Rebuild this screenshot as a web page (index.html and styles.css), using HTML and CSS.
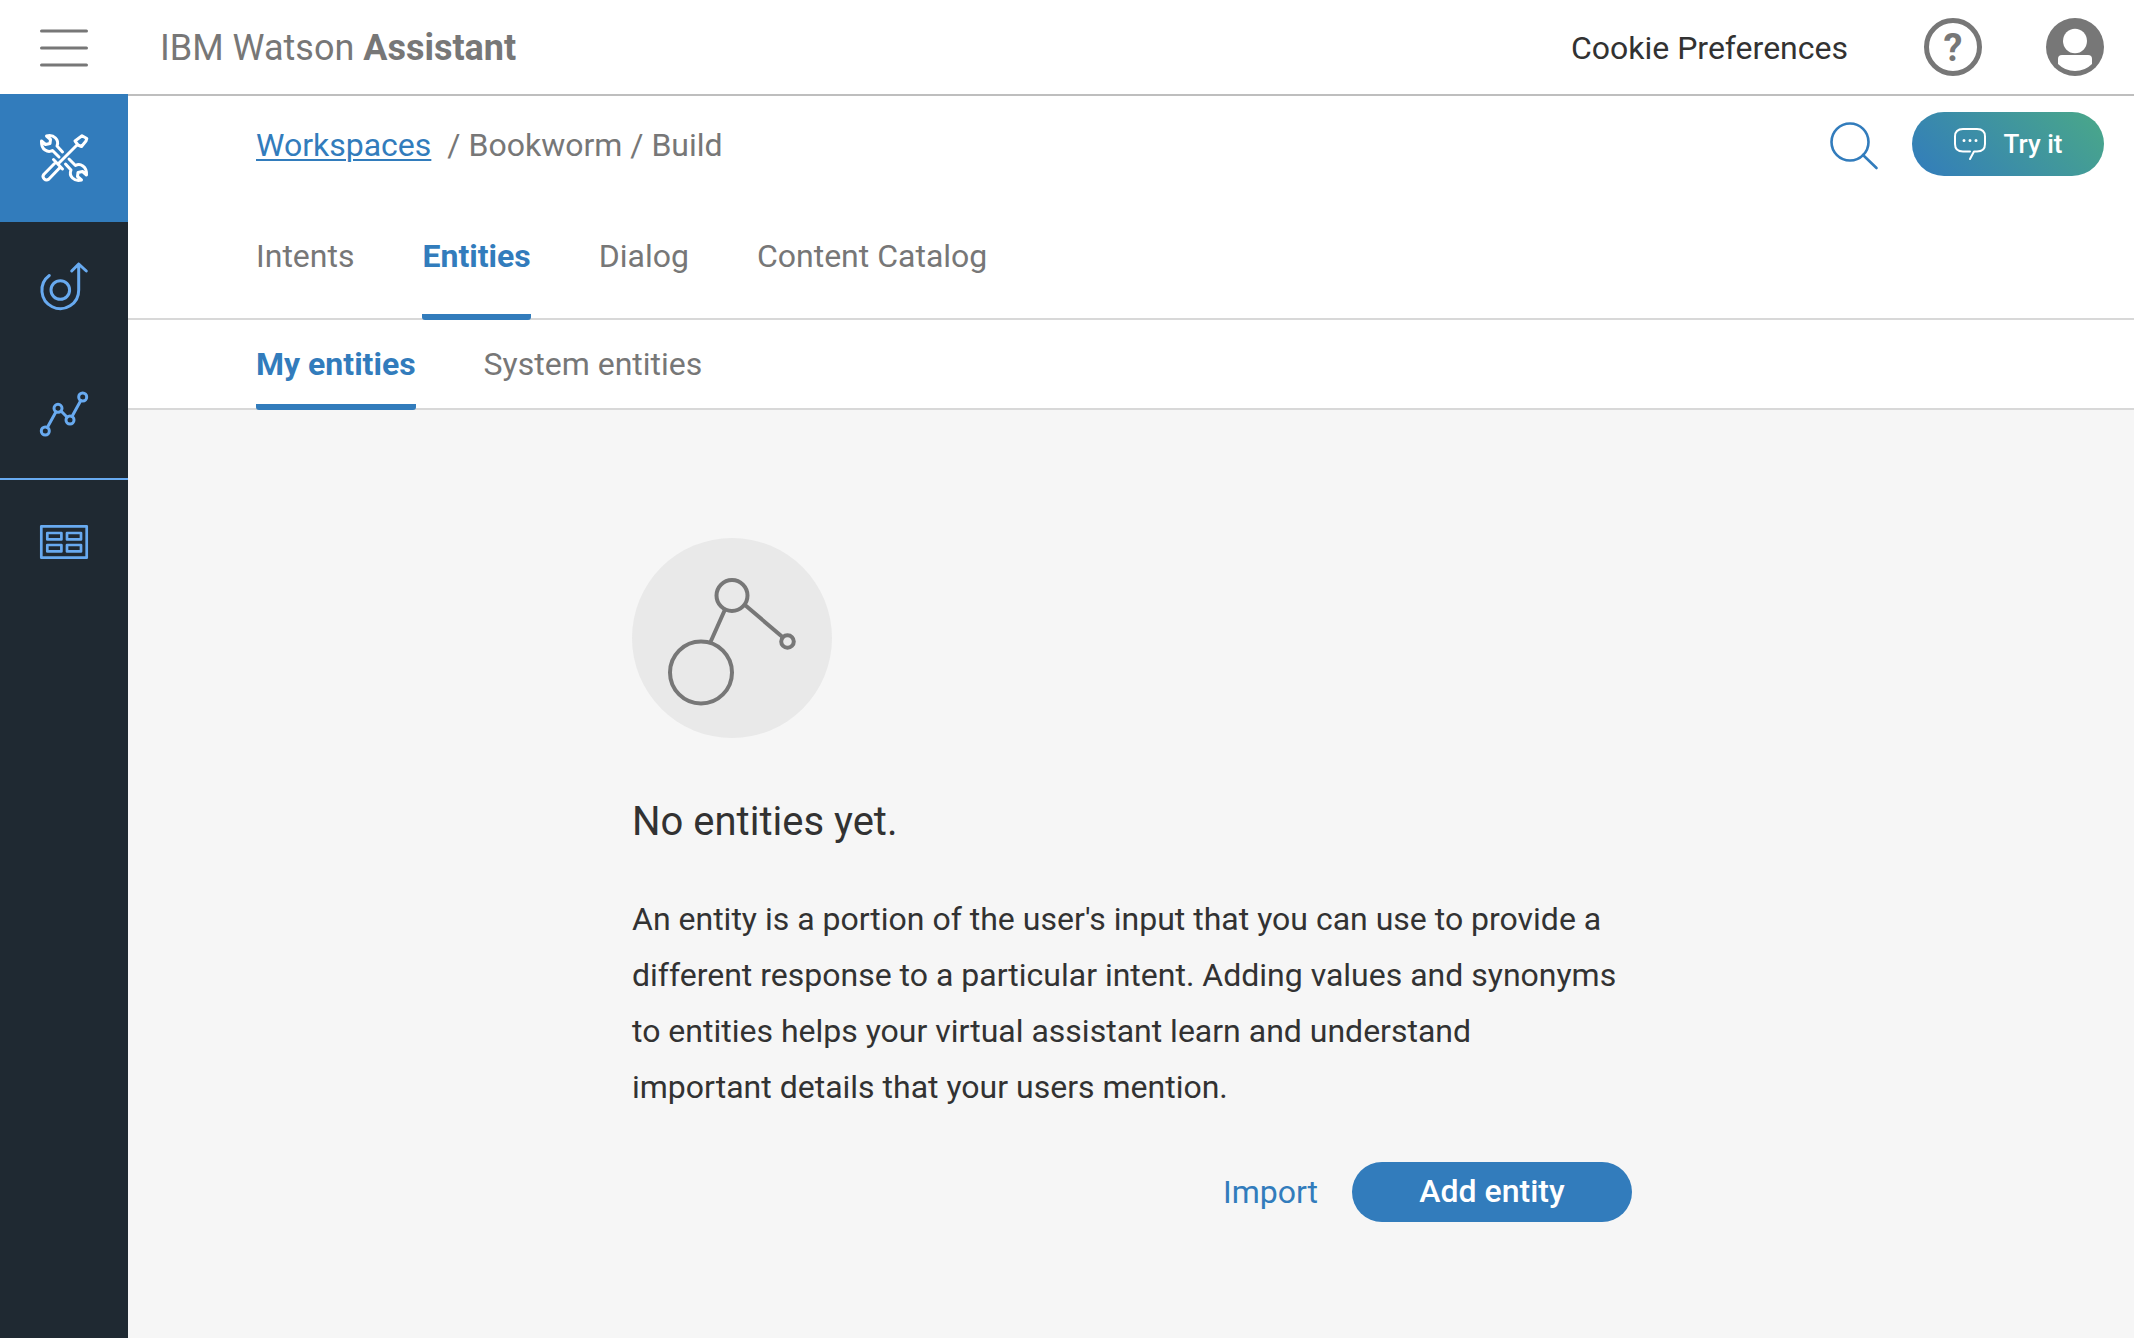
FILE: index.html
```html
<!DOCTYPE html>
<html lang="en">
<head>
<meta charset="utf-8">
<meta name="viewport" content="width=device-width, initial-scale=1">
<title>IBM Watson Assistant</title>
<link rel="stylesheet" href="styles.css">
</head>
<body>
<header class="header">
  <button class="icon-button menu-button" type="button" aria-label="Menu">
    <svg class="icon" viewBox="0 0 48 48" stroke-width="3"><path d="M1.500 8H46.500M1.500 25H46.500M1.500 42H46.500"/></svg>
  </button>
  <div class="brand">IBM Watson <strong>Assistant</strong></div>
  <a class="cookie-link" href="#">Cookie Preferences</a>
  <button class="icon-button help-button" type="button" aria-label="Help">?</button>
  <button class="icon-button" type="button" aria-label="Account">
    <svg class="avatar" viewBox="0 0 58 58"><circle cx="29" cy="29" r="29" fill="#777"/><ellipse cx="29" cy="23" rx="12" ry="12.200" fill="#fff"/><path d="M12 41Q12 37 16 37H42Q46 37 46 41V46Q39 53 29 53T12 46Z" fill="#fff"/></svg>
  </button>
</header>
<div class="shell">
  <nav class="sidebar" aria-label="Main">
    <a class="side-link side-link-active" href="#" aria-label="Build">
      <svg class="icon" viewBox="0 0 48 48" stroke-width="3"><path d="M37.500 10.500 18 30M35 7 42 1.800 46.800 4.500 46 7 41.500 12.500 38 11ZM13.500 25.500 22.500 35M15.500 28.500 3.700 40.500C1.500 43.500 5.500 47.500 8.700 45.200L20 33.500M19 23 12.500 16.500C8 19 1 16 1.500 7L5.500 10.500 10 9.500 10.500 5.500 6.500 2C14 0 19.500 6 17 12L22.500 18M29 25 35.500 31.500C40 29 47 32 46.500 41L42.500 37.500 38 38.500 37.500 42.500 41.500 46C34 48 28.500 42 31 36L25.500 30"/></svg>
    </a>
    <a class="side-link" href="#" aria-label="Deploy">
      <svg class="icon" viewBox="0 0 48 48" stroke-width="3"><circle cx="20.300" cy="28" r="9.300"/><path d="M9.300 13.500A18.400 18.400 0 1 0 38.700 28V2M31.700 9 38.700 2 46.300 9"/></svg>
    </a>
    <a class="side-link" href="#" aria-label="Improve">
      <svg class="icon" viewBox="0 0 48 48" stroke-width="3"><circle cx="5.300" cy="41" r="4"/><circle cx="18" cy="18.300" r="4"/><circle cx="30" cy="30" r="4"/><circle cx="42.700" cy="7" r="4"/><path d="M7.300 37.500 16 21.800M21 21 27.200 27.200M32 26.500 40.800 10.500"/></svg>
    </a>
    <a class="side-link side-link-divided" href="#" aria-label="Workspaces">
      <svg class="icon" viewBox="0 0 48 48" stroke-width="2.700" stroke-linejoin="miter"><path d="M1.300 7.300H46.700V38.700H1.300ZM7.300 14H21.400V20.400H7.300ZM27 14H41V20.400H27ZM7.300 26H21.400V32.400H7.300ZM27 26H41V32.400H27Z"/></svg>
    </a>
  </nav>
  <main class="main">
    <div class="toolbar">
      <nav class="breadcrumb" aria-label="Breadcrumb"><a class="breadcrumb-link" href="#">Workspaces</a><span>/ Bookworm / Build</span></nav>
      <button class="icon-button search-button" type="button" aria-label="Search">
        <svg class="icon" viewBox="0 0 48 48" stroke-width="2.600"><circle cx="20" cy="22" r="18.500"/><path d="M33 35 46.500 48"/></svg>
      </button>
      <button class="try-button" type="button">
        <svg class="chat-icon" viewBox="0 0 32 32" stroke-width="2"><path d="M16 23.500H9Q1 23.500 1 16V8.500Q1 1 9 1H23Q31 1 31 8.500V16Q31 23.500 23 23.500H20L16 31"/><path d="M10 12.500h0M16 12.500h0M22 12.500h0" stroke-width="3"/></svg>
        Try it
      </button>
    </div>
    <nav class="tabs" aria-label="Build">
      <a class="tab" href="#">Intents</a>
      <a class="tab tab-active" href="#">Entities</a>
      <a class="tab" href="#">Dialog</a>
      <a class="tab" href="#">Content Catalog</a>
    </nav>
    <nav class="tabs subtabs" aria-label="Entities">
      <a class="tab tab-active" href="#">My entities</a>
      <a class="tab" href="#">System entities</a>
    </nav>
    <section class="content">
      <div class="empty">
        <svg class="empty-art" viewBox="0 0 200 200"><circle cx="100" cy="100" r="100" fill="#e9e9e9"/><g fill="none" stroke="#777" stroke-width="4"><circle cx="69" cy="134.500" r="31"/><circle cx="100" cy="57.500" r="15.500"/><circle cx="155.500" cy="103.500" r="6.300"/><path d="M78.500 104 93 71.500M113 67 150.500 99"/></g></svg>
        <h1 class="empty-title">No entities yet.</h1>
        <p class="empty-text">An entity is a portion of the user's input that you can use to provide a different response to a particular intent. Adding values and synonyms to entities helps your virtual assistant learn and understand <br>important details that your users mention.</p>
        <div class="actions">
          <button class="import-button" type="button">Import</button>
          <button class="add-button" type="button">Add entity</button>
        </div>
      </div>
    </section>
  </main>
</div>
</body>
</html>
```

FILE: styles.css
```css
* { box-sizing: border-box; }

body {
  margin: 0;
  min-height: 100vh;
  display: flex;
  flex-direction: column;
  font-family: Roboto, "Liberation Sans", sans-serif;
  font-size: 32px;
  line-height: 40px;
  color: #323232;
  background: #fff;
}

a { color: inherit; text-decoration: none; }

button {
  margin: 0;
  padding: 0;
  border: 0;
  background: none;
  font: inherit;
  cursor: pointer;
}

.icon,
.chat-icon {
  display: block;
  width: 48px;
  height: 48px;
  overflow: visible;
  fill: none;
  stroke: currentColor;
  stroke-linecap: round;
  stroke-linejoin: round;
}

.header {
  display: flex;
  align-items: center;
  height: 94px;
  padding-right: 30px;
}

.icon-button { flex: none; color: #777; }

.menu-button {
  display: flex;
  justify-content: center;
  width: 128px;
}

.brand {
  margin: 0 auto 0 32px;
  padding-top: 2px;
  font-size: 36px;
  color: #777;
}

.cookie-link { margin-right: 76px; padding-top: 2px; }

.help-button {
  width: 58px;
  height: 58px;
  margin-right: 64px;
  padding-top: 2px;
  border: 5px solid #777;
  border-radius: 50%;
  font-size: 38px;
  font-weight: 700;
}

.avatar { display: block; width: 58px; height: 58px; }

.shell { flex: 1; display: flex; }

.sidebar { flex: none; width: 128px; background: #1f2932; }

.side-link {
  display: flex;
  align-items: center;
  justify-content: center;
  height: 128px;
  color: #68aaf0;
}

.side-link-active { background: #327cbc; color: #fff; }

.side-link-divided { border-top: 2px solid #68aaf0; }

.main {
  flex: 1;
  min-width: 0;
  display: flex;
  flex-direction: column;
  border-top: 2px solid #bebebe;
}

.toolbar {
  display: flex;
  align-items: center;
  padding: 16px 30px 0 128px;
}

.breadcrumb {
  display: flex;
  gap: 16px;
  margin-right: auto;
  padding-top: 2px;
  color: #777;
}

.breadcrumb-link {
  color: #327cbc;
  text-decoration: underline;
  text-decoration-thickness: 2px;
  text-underline-offset: 3px;
}

.search-button { margin-right: 34px; color: #327cbc; }

.try-button {
  display: flex;
  align-items: center;
  justify-content: center;
  gap: 18px;
  width: 192px;
  height: 64px;
  border-radius: 32px;
  background: linear-gradient(45deg, #327cbc, #4aa888);
  color: #fff;
  font-size: 26px;
  font-weight: 500;
}

.chat-icon { width: 32px; height: 32px; }

.tabs {
  display: flex;
  gap: 68px;
  height: 144px;
  padding-left: 128px;
  border-bottom: 2px solid #d8d8d8;
  color: #777;
}

.tab {
  height: 144px;
  padding-top: 60px;
  border-bottom: 6px solid transparent;
  border-radius: 3px;
}

.tab-active {
  border-color: #327cbc;
  color: #327cbc;
  font-weight: 700;
}

.subtabs { height: 90px; }
.subtabs .tab { height: 90px; padding-top: 24px; }

.content { flex: 1; padding: 128px 30px 128px 32px; background: #f6f6f6; }

.empty { max-width: 1000px; margin: 0 auto; }

.empty-art { display: block; width: 200px; height: 200px; }

.empty-title {
  margin: 60px 0 0;
  font-size: 40px;
  line-height: 48px;
  font-weight: 400;
}

.empty-text { margin: 45px 0 0; line-height: 56px; }

.actions {
  display: flex;
  align-items: center;
  justify-content: flex-end;
  gap: 34px;
  margin-top: 47px;
}

.import-button { color: #327cbc; }

.add-button {
  width: 280px;
  height: 60px;
  padding-bottom: 2px;
  border-radius: 30px;
  background: #327cbc;
  color: #fff;
  font-weight: 500;
}
```
